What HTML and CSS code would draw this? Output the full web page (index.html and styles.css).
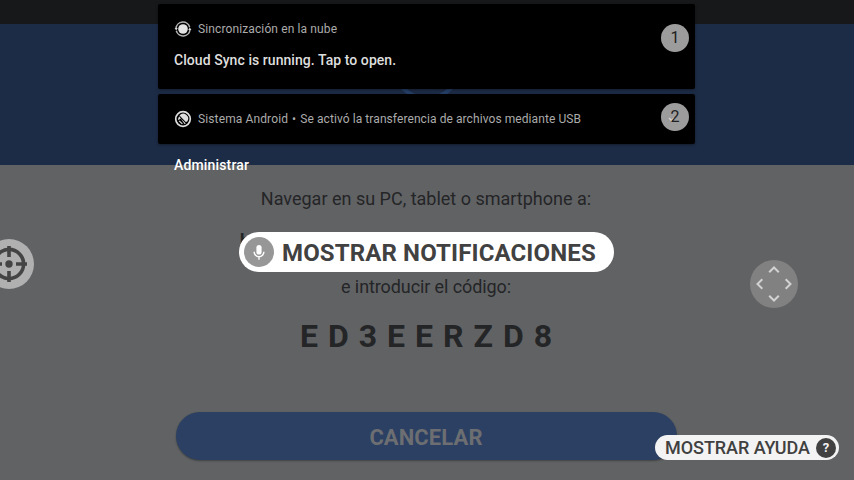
FILE: index.html
```html
<!DOCTYPE html>
<html lang="es">
<head>
<meta charset="utf-8">
<title>Cloud Sync</title>
<link rel="stylesheet" href="styles.css">
</head>
<body>
<div class="screen">
  <div class="statusbar"></div>
  <header class="hero">
    <svg class="ring" width="80" height="80" viewBox="0 0 80 80"><circle cx="40" cy="40" r="34" fill="none" stroke="#263f68" stroke-width="4"/></svg>
  </header>
  <main class="content">
    <p class="line">Navegar en su PC, tablet o smartphone a:</p>
    <p class="address">h</p>
    <p class="line second">e introducir el código:</p>
    <p class="code">ED3EERZD8</p>
    <button class="cancel">CANCELAR</button>
  </main>

  <section class="shade">
    <article class="card tall">
      <div class="source">
        <svg class="icon" width="18" height="18" viewBox="0 0 18 18"><circle cx="9" cy="9" r="4.8" fill="#e4e4e4"/><path d="M2 8.200a7 7 0 0 1 13.700-1M16 9.800a7 7 0 0 1-13.700 1" fill="none" stroke="#b4b4b4" stroke-width="1.5"/><path d="M.6 8h3.200L2.200 10.500zM14.200 10h3.200L15.800 7.500z" fill="#d8d8d8"/></svg>
        <span>Sincronización en la nube</span>
      </div>
      <strong class="message">Cloud Sync is running. Tap to open.</strong>
      <span class="badge">1</span>
    </article>
    <article class="card">
      <div class="source">
        <svg class="icon" width="18" height="18" viewBox="0 0 18 18"><circle cx="9" cy="9" r="7.300" fill="none" stroke="#dedede" stroke-width="1.700"/><path d="M5.500 5.500A4.900 4.900 0 0 1 13.300 11.400L11.800 12z" fill="#dedede"/><path d="M5.200 6.200A4.900 4.900 0 0 0 4.200 10.200L6.800 8.600l5 5-1.300.5" fill="#dedede"/><path d="M6.800 8.800L4.800 11l3.600 3 1.500-.7-2.400-2z" fill="#000"/><path d="M5.200 10.900l3.200 3" stroke="#dedede" stroke-width="1.200"/></svg>
        <span class="app">Sistema Android</span><span class="dot">•</span><span class="detail">Se activó la transferencia de archivos mediante USB</span>
      </div>
      <span class="badge second"><svg class="check" width="8" height="6" viewBox="0 0 8 6"><path d="M1 2l2.500 2.500L6 2" fill="none" stroke="#d6d6d6" stroke-width="1.300"/></svg><b>2</b></span>
    </article>
    <span class="manage">Administrar</span>
  </section>

  <svg class="target" width="50" height="50" viewBox="0 0 50 50"><circle cx="25" cy="25" r="25" fill="#b0b0b0"/><g fill="none" stroke="#444" stroke-width="3.600"><circle cx="25" cy="25" r="14.600"/><path d="M25 7v11M25 32v11M7 25h11M32 25h11"/></g><circle cx="25" cy="25" r="3.700" fill="#444"/></svg>

  <div class="voice">
    <svg width="30" height="30" viewBox="0 0 30 30"><circle cx="15" cy="15" r="15" fill="#979797"/><rect x="12.400" y="8" width="5.200" height="9.500" rx="2.600" fill="#fff"/><path d="M10.100 14.800a4.900 4.900 0 0 0 9.800 0M15 19.700v3" fill="none" stroke="#fff" stroke-width="1.400"/></svg>
    <span>MOSTRAR NOTIFICACIONES</span>
  </div>

  <svg class="pad" width="48" height="48" viewBox="0 0 48 48"><circle cx="24" cy="24" r="24" fill="#818181"/><path d="M19.200 12.300L24 7.500l4.800 4.800M19.200 35.700L24 40.500l4.800-4.800M12.300 19.200L7.500 24l4.800 4.800M35.700 19.200L40.500 24l-4.800 4.800" fill="none" stroke="#d2d2d2" stroke-width="2"/></svg>

  <div class="help"><span>MOSTRAR AYUDA</span><i class="question">?</i></div>
</div>
</body>
</html>
```
FILE: styles.css
```css
* { box-sizing: border-box; }
body { margin: 0; font-family: Roboto, sans-serif; }
p { margin: 0; }
.screen { position: relative; width: 854px; height: 480px; overflow: hidden; background: #616264; }
.statusbar { height: 24px; background: #17181a; }
.hero { height: 141px; background: #1d2c46; display: flex; justify-content: center; }
.ring { display: block; }
.content { display: flex; flex-direction: column; align-items: center; padding-right: 2px; color: #242527; }
.line { margin-top: 22px; height: 24px; font-size: 18px; line-height: 24px; white-space: nowrap; }
.address { align-self: flex-start; margin: 18px 0 0 240px; height: 24px; font-size: 18px; line-height: 24px; font-weight: 700; }
.line.second { margin-top: 22px; letter-spacing: -.1px; }
.code { margin-top: 17px; height: 40px; padding-left: 10px; font-size: 32px; line-height: 40px; font-weight: 700; letter-spacing: 10px; }
.cancel { margin-top: 56px; width: 501px; height: 48px; padding: 3px 0 0; border: 0; border-radius: 24px; background: #2b4063; color: #6c6e71; box-shadow: 0 1px 2px rgba(0,0,0,.35); font: 700 22px/26px Roboto, sans-serif; letter-spacing: .1px; }
.shade { position: absolute; left: 158px; top: 4px; width: 537px; display: flex; flex-direction: column; gap: 5px; }
.card { position: relative; height: 50px; padding: 16px 16px 0; border-radius: 2px; background: #000; box-shadow: 0 1px 3px rgba(0,0,0,.4); }
.card.tall { height: 85px; }
.source { display: flex; align-items: center; height: 18px; color: #ababab; font-size: 12px; letter-spacing: .12px; white-space: nowrap; }
.icon { margin-right: 6px; }
.dot { margin: 0 4px; }
.detail { letter-spacing: .08px; }
.message { display: block; margin-top: 12px; color: #dedede; font-size: 14px; line-height: 20px; font-weight: 500; letter-spacing: .06px; }
.badge { position: absolute; right: 6px; top: 20px; width: 28px; height: 28px; border-radius: 50%; background: #9c9c9c; color: #202020; font-size: 16px; line-height: 28px; text-align: center; }
.badge.second { top: 9px; }
.badge b { position: relative; font-weight: 400; }
.check { position: absolute; left: 7px; top: 13px; }
.manage { margin: 6px 0 0 16px; color: #fff; font-size: 14px; line-height: 20px; font-weight: 500; letter-spacing: .16px; }
.target { position: absolute; left: -16px; top: 239px; }
.voice { position: absolute; left: 239px; top: 232px; width: 375px; height: 40px; padding-left: 5px; border-radius: 20px; background: #fff; display: flex; align-items: center; gap: 8px; color: #414141; font-size: 24px; line-height: 28px; font-weight: 700; letter-spacing: .13px; white-space: nowrap; }
.voice span { padding-top: 2px; }
.pad { position: absolute; left: 750px; top: 260px; }
.help { position: absolute; left: 655px; top: 435px; width: 184px; height: 25px; padding: 0 3px 0 10px; border-radius: 13px; background: #f3f3f3; display: flex; align-items: center; justify-content: space-between; color: #404040; font-size: 18px; font-weight: 500; letter-spacing: -.05px; white-space: nowrap; }
.question { width: 20px; height: 20px; border-radius: 50%; background: #414141; color: #f3f3f3; font-size: 13px; line-height: 20px; font-style: normal; font-weight: 700; text-align: center; }
```
